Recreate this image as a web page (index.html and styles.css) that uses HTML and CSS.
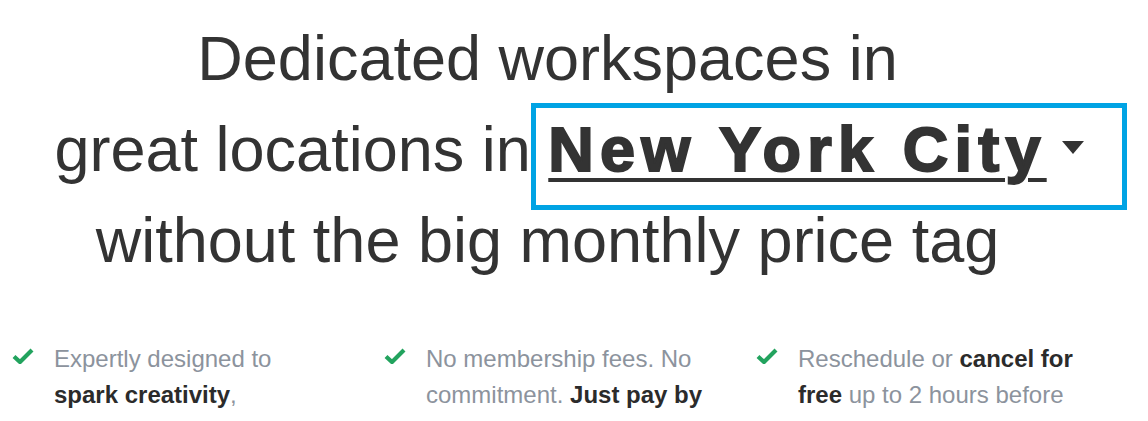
FILE: index.html
```html
<!DOCTYPE html>
<html lang="en">
<head>
<meta charset="utf-8">
<title>Dedicated workspaces</title>
<link rel="stylesheet" href="styles.css">
</head>
<body>
<main class="hero">
  <h1 class="headline">Dedicated workspaces in<br>great locations in <span class="city"><span class="city-name">New York City</span><span class="city-box"></span><span class="caret"></span></span><br>without the big monthly price tag</h1>
  <ul class="features">
    <li class="feature">
      <svg class="check" viewBox="0 0 22 16" width="22" height="16"><path d="M2 8.5 L8 14 L20 2" fill="none" stroke="#22a35e" stroke-width="4.2" stroke-linejoin="miter" stroke-linecap="butt"/></svg>
      <p class="feature-text">Expertly designed to <b>spark creativity</b>,</p>
    </li>
    <li class="feature">
      <svg class="check" viewBox="0 0 22 16" width="22" height="16"><path d="M2 8.5 L8 14 L20 2" fill="none" stroke="#22a35e" stroke-width="4.2" stroke-linejoin="miter" stroke-linecap="butt"/></svg>
      <p class="feature-text">No membership fees. No commitment. <b>Just pay by</b></p>
    </li>
    <li class="feature">
      <svg class="check" viewBox="0 0 22 16" width="22" height="16"><path d="M2 8.5 L8 14 L20 2" fill="none" stroke="#22a35e" stroke-width="4.2" stroke-linejoin="miter" stroke-linecap="butt"/></svg>
      <p class="feature-text">Reschedule or <b>cancel for free</b> up to 2 hours before</p>
    </li>
  </ul>
</main>
</body>
</html>
```
FILE: styles.css
```css
html, body {
  margin: 0;
  padding: 0;
  background: #ffffff;
  overflow: hidden;
}
body {
  font-family: "Liberation Sans", Arial, sans-serif;
  color: #333333;
}
.hero {
  display: flex;
  flex-direction: column;
}
.headline {
  margin: 13px 0 0;
  padding: 0 53px 0 0;
  font-size: 63px;
  line-height: 91px;
  font-weight: 400;
  text-align: center;
  color: #333333;
}
.city {
  position: relative;
  display: inline;
}
.city-name {
  font-weight: 700;
  letter-spacing: 6.2px;
  -webkit-text-stroke: 2px #333333;
  text-decoration: underline;
  text-decoration-thickness: 4px;
  text-underline-offset: 7px;
  margin-right: -6.2px;
}
.city-box {
  position: absolute;
  top: -11px;
  bottom: -26px;
  left: -17px;
  right: -86px;
  border: 5px solid #00a3e4;
}
.caret {
  position: absolute;
  right: -43px;
  top: 27px;
  width: 0;
  height: 0;
  border-left: 11.5px solid transparent;
  border-right: 11.5px solid transparent;
  border-top: 13px solid #333333;
}
.features {
  list-style: none;
  margin: 55px 0 0;
  padding: 0 20px 0 12px;
  display: grid;
  grid-template-columns: repeat(3, 1fr);
}
.feature {
  display: flex;
  align-items: flex-start;
  gap: 20px;
}
.check {
  flex: none;
  margin-top: 7px;
}
.feature-text {
  margin: 0;
  max-width: 282px;
  font-size: 24px;
  line-height: 36px;
  color: #8c939d;
}
.feature-text b {
  color: #2b2b2b;
  font-weight: 700;
}
```
